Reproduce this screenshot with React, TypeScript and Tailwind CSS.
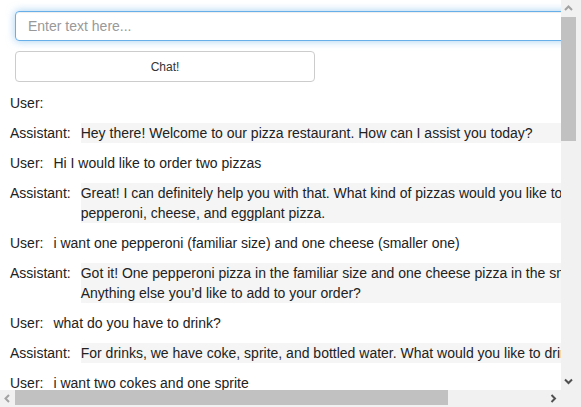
import React, { useEffect, useRef } from 'react';

type Message = { role: 'User' | 'Assistant'; text: string };

const messages: Message[] = [
  { role: 'User', text: '' },
  { role: 'Assistant', text: 'Hey there! Welcome to our pizza restaurant. How can I assist you today?' },
  { role: 'User', text: 'Hi I would like to order two pizzas' },
  {
    role: 'Assistant',
    text: 'Great! I can definitely help you with that. What kind of pizzas would you like to order? We have pepperoni, cheese, and eggplant pizza.',
  },
  { role: 'User', text: 'i want one pepperoni (familiar size) and one cheese (smaller one)' },
  {
    role: 'Assistant',
    text: 'Got it! One pepperoni pizza in the familiar size and one cheese pizza in the smaller size. Anything else you\u2019d like to add to your order?',
  },
  { role: 'User', text: 'what do you have to drink?' },
  { role: 'Assistant', text: 'For drinks, we have coke, sprite, and bottled water. What would you like to drink?' },
  { role: 'User', text: 'i want two cokes and one sprite' },
  {
    role: 'Assistant',
    text: 'Great choice! So that\u2019s one familiar pepperoni pizza, one small cheese pizza, two cokes and one sprite. Would you like pickup or delivery?',
  },
  { role: 'User', text: 'delivery please' },
  { role: 'Assistant', text: 'Sure thing! Could you please give me your address?' },
];

const Chevron: React.FC<{ dir: 'up' | 'down' | 'left' | 'right'; color: string }> = ({ dir, color }) => {
  const paths = {
    up: 'M1 6 L4.5 2.5 L8 6',
    down: 'M1 2.5 L4.5 6 L8 2.5',
    left: 'M6 1 L2.5 4.5 L6 8',
    right: 'M2.5 1 L6 4.5 L2.5 8',
  };
  return (
    <svg width="9" height="9" viewBox="0 0 9 9">
      <path d={paths[dir]} fill="none" stroke={color} strokeWidth="2" />
    </svg>
  );
};

const App: React.FC = () => {
  const inputRef = useRef<HTMLInputElement>(null);

  // focus without scrolling the clipped page area
  useEffect(() => {
    inputRef.current?.focus({ preventScroll: true });
  }, []);

  return (
    <div
      className="w-[581px] h-[407px] flex flex-col overflow-hidden bg-white text-[#222]"
      style={{ fontFamily: '"Liberation Sans", Arial, sans-serif' }}
    >
      <div className="flex h-[390px]">
        {/* visible page area */}
        <div className="w-[561px] h-full overflow-hidden">
          <div className="w-[692px]">
            <div className="pt-[11px] px-[15px]">
              <input
                ref={inputRef}
                placeholder="Enter text here..."
                className="block w-full h-[30px] px-[12px] text-[14px] rounded-[4px] border border-[#66afe9] outline-none shadow-[inset_0_1px_1px_rgba(0,0,0,0.075),0_0_8px_rgba(102,175,233,0.6)] placeholder:text-[#999]"
              />
              <button className="mt-[10px] w-[300px] h-[31px] bg-white border border-[#ccc] rounded-[4px] text-[12px] text-[#333]">
                Chat!
              </button>
            </div>

            <div className="mt-[11px] px-[10px] flex flex-col gap-[10px] text-[14px] leading-[20px]">
              {messages.map((m, i) => (
                <div key={i} className="flex">
                  <span className="whitespace-nowrap mr-[10px]">{m.role}:</span>
                  <div className={m.role === 'Assistant' ? 'flex-1 bg-[#f5f5f5]' : 'flex-1'}>{m.text}</div>
                </div>
              ))}
            </div>
          </div>
        </div>

        {/* vertical scrollbar */}
        <div className="w-[20px] h-full bg-[#f1f1f1]">
          <div className="w-[15px] h-full flex flex-col">
            <div className="h-[17px] flex items-center justify-center">
              <Chevron dir="up" color="#a3a3a3" />
            </div>
            <div className="h-[124px] bg-[#c1c1c1]" />
            <div className="flex-1" />
            <div className="h-[17px] flex items-center justify-center">
              <Chevron dir="down" color="#505050" />
            </div>
          </div>
        </div>
      </div>

      {/* horizontal scrollbar */}
      <div className="flex h-[17px] bg-[#f1f1f1]">
        <div className="w-[15px] flex items-center justify-center">
          <Chevron dir="left" color="#a3a3a3" />
        </div>
        <div className="w-[433px] mb-[2px] bg-[#c1c1c1]" />
        <div className="flex-1" />
        <div className="w-[15px] flex items-center justify-center">
          <Chevron dir="right" color="#505050" />
        </div>
        <div className="w-[20px] bg-[#f1f1f1]" />
      </div>
    </div>
  );
};

export default App;
